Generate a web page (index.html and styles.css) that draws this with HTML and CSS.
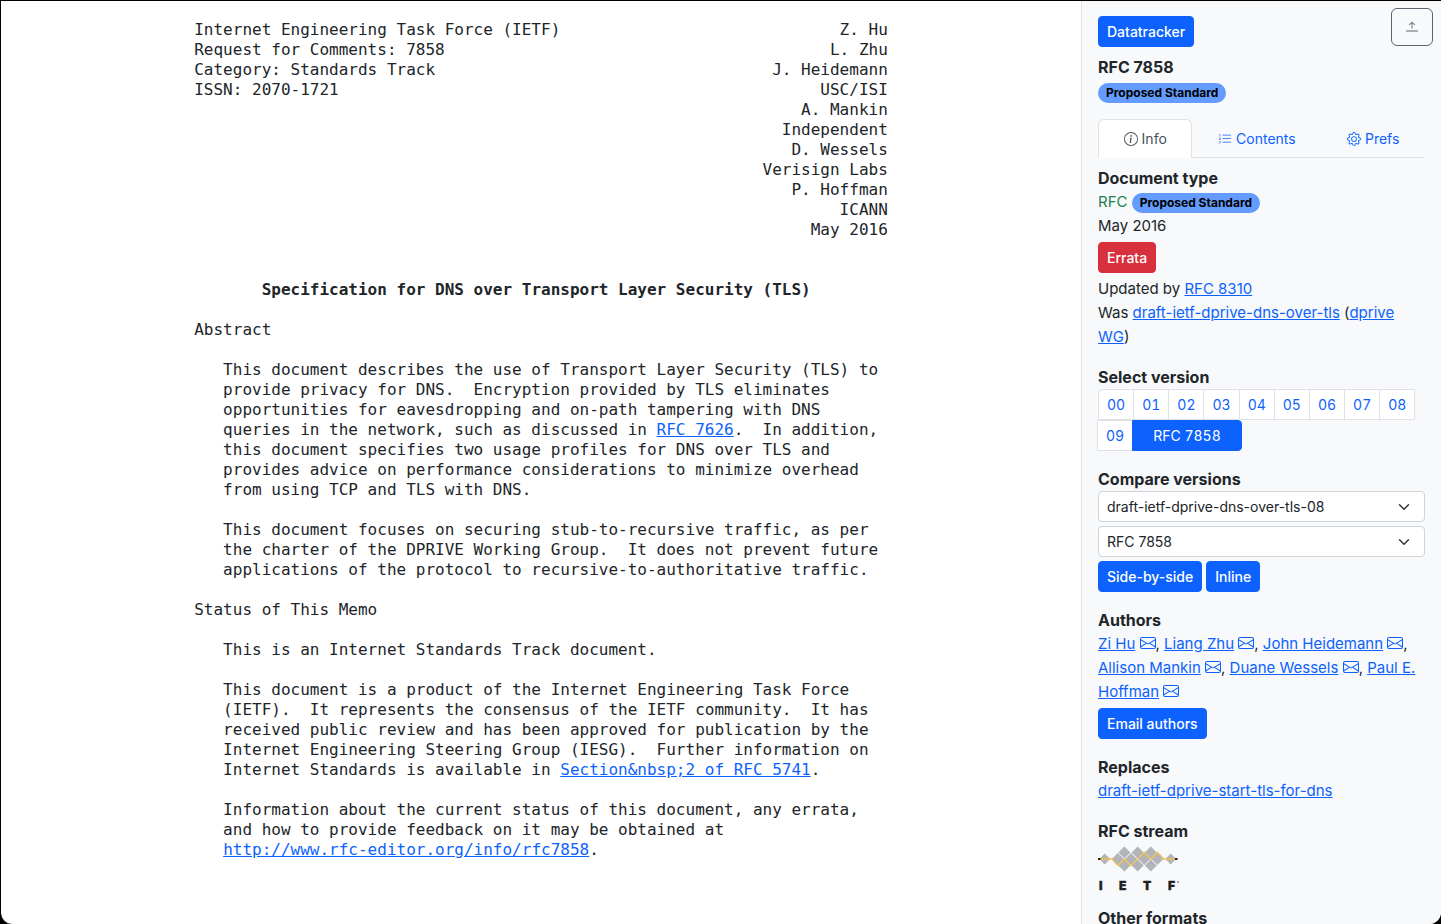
FILE: index.html
```html
<!DOCTYPE html>
<html lang="en">
<head>
<meta charset="utf-8">
<title>RFC 7858 - Specification for DNS over Transport Layer Security (TLS)</title>
<meta name="viewport" content="width=device-width, initial-scale=1">
<link rel="stylesheet" href="styles.css">
</head>
<body>
<svg class="symbols" aria-hidden="true">
  <symbol id="envelope" viewBox="0 0 16 16"><path d="M0 4a2 2 0 0 1 2-2h12a2 2 0 0 1 2 2v8a2 2 0 0 1-2 2H2a2 2 0 0 1-2-2zm2-1a1 1 0 0 0-1 1v.217l7 4.2 7-4.2V4a1 1 0 0 0-1-1zm13 2.383-4.708 2.825L15 11.105zm-.034 6.876-5.64-3.471L8 9.583l-1.326-.795-5.64 3.47A1 1 0 0 0 2 13h12a1 1 0 0 0 .966-.741M1 11.105l4.708-2.897L1 5.383z"/></symbol>
</svg>
<div class="window">
<main class="document">
<pre class="rfc-text">
Internet Engineering Task Force (IETF)                             Z. Hu
Request for Comments: 7858                                        L. Zhu
Category: Standards Track                                   J. Heidemann
ISSN: 2070-1721                                                  USC/ISI
                                                               A. Mankin
                                                             Independent
                                                              D. Wessels
                                                           Verisign Labs
                                                              P. Hoffman
                                                                   ICANN
                                                                May 2016


       <strong>Specification for DNS over Transport Layer Security (TLS)</strong>

Abstract

   This document describes the use of Transport Layer Security (TLS) to
   provide privacy for DNS.  Encryption provided by TLS eliminates
   opportunities for eavesdropping and on-path tampering with DNS
   queries in the network, such as discussed in <a href="#rfc7626">RFC 7626</a>.  In addition,
   this document specifies two usage profiles for DNS over TLS and
   provides advice on performance considerations to minimize overhead
   from using TCP and TLS with DNS.

   This document focuses on securing stub-to-recursive traffic, as per
   the charter of the DPRIVE Working Group.  It does not prevent future
   applications of the protocol to recursive-to-authoritative traffic.

Status of This Memo

   This is an Internet Standards Track document.

   This document is a product of the Internet Engineering Task Force
   (IETF).  It represents the consensus of the IETF community.  It has
   received public review and has been approved for publication by the
   Internet Engineering Steering Group (IESG).  Further information on
   Internet Standards is available in <a href="#rfc5741">Section&amp;nbsp;2 of RFC 5741</a>.

   Information about the current status of this document, any errata,
   and how to provide feedback on it may be obtained at
   <a href="#rfc7858">http://www.rfc-editor.org/info/rfc7858</a>.
</pre>
</main>
<aside class="sidebar">
  <button class="toggle" type="button" aria-label="Hide sidebar">
    <svg class="icon" viewBox="0 0 16 16"><path d="M8 10a.5.5 0 0 0 .5-.5V3.707l2.146 2.147a.5.5 0 0 0 .708-.708l-3-3a.5.5 0 0 0-.708 0l-3 3a.5.5 0 1 0 .708.708L7.5 3.707V9.5a.5.5 0 0 0 .5.5m-7 2.5a.5.5 0 0 1 .5-.5h13a.5.5 0 0 1 0 1h-13a.5.5 0 0 1-.5-.5"/></svg>
  </button>
  <header class="summary">
    <a class="btn" href="#datatracker">Datatracker</a>
    <div class="summary-title">RFC 7858</div>
    <span class="badge">Proposed Standard</span>
  </header>
  <nav class="tabs">
    <a class="tab active" href="#info"><svg class="icon" viewBox="0 0 16 16"><path d="M8 15A7 7 0 1 1 8 1a7 7 0 0 1 0 14m0 1A8 8 0 1 0 8 0a8 8 0 0 0 0 16"/><path d="m8.93 6.588-2.29.287-.082.38.45.083c.294.07.352.176.288.469l-.738 3.468c-.194.897.105 1.319.808 1.319.545 0 1.178-.252 1.465-.598l.088-.416c-.2.176-.492.246-.686.246-.275 0-.375-.193-.304-.533zM9 4.5a1 1 0 1 1-2 0 1 1 0 0 1 2 0"/></svg> Info</a>
    <a class="tab" href="#contents"><svg class="icon" viewBox="0 0 16 16"><path fill-rule="evenodd" d="M5 11.5a.5.5 0 0 1 .5-.5h9a.5.5 0 0 1 0 1h-9a.5.5 0 0 1-.5-.5m0-4a.5.5 0 0 1 .5-.5h9a.5.5 0 0 1 0 1h-9a.5.5 0 0 1-.5-.5m0-4a.5.5 0 0 1 .5-.5h9a.5.5 0 0 1 0 1h-9a.5.5 0 0 1-.5-.5"/><path d="M1.713 11.865v-.474H2c.217 0 .363-.137.363-.317 0-.185-.158-.31-.361-.31-.223 0-.367.152-.373.31h-.59c.016-.467.373-.787.986-.787.588-.002.954.291.957.703a.595.595 0 0 1-.492.594v.033a.615.615 0 0 1 .569.631c.003.533-.502.8-1.051.8-.656 0-1-.37-1.008-.794h.582c.008.178.186.306.422.309.254 0 .424-.145.422-.35-.002-.195-.155-.348-.414-.348h-.3zm-.004-4.699h-.604v-.035c0-.408.295-.844.958-.844.583 0 .96.326.96.756 0 .389-.257.617-.476.848l-.537.572v.03h1.054V9H1.143v-.395l.957-.99c.138-.142.293-.304.293-.508 0-.18-.147-.32-.342-.32a.33.33 0 0 0-.342.338zM2.564 5h-.635V2.924h-.031l-.598.42v-.567l.629-.443h.635z"/></svg> Contents</a>
    <a class="tab" href="#prefs"><svg class="icon" viewBox="0 0 16 16"><path d="M8 4.754a3.246 3.246 0 1 0 0 6.492 3.246 3.246 0 0 0 0-6.492M5.754 8a2.246 2.246 0 1 1 4.492 0 2.246 2.246 0 0 1-4.492 0"/><path d="M9.796 1.343c-.527-1.79-3.065-1.79-3.592 0l-.094.319a.873.873 0 0 1-1.255.52l-.292-.16c-1.64-.892-3.433.902-2.54 2.541l.159.292a.873.873 0 0 1-.52 1.255l-.319.094c-1.79.527-1.79 3.065 0 3.592l.319.094a.873.873 0 0 1 .52 1.255l-.16.292c-.892 1.64.901 3.434 2.541 2.54l.292-.159a.873.873 0 0 1 1.255.52l.094.319c.527 1.79 3.065 1.79 3.592 0l.094-.319a.873.873 0 0 1 1.255-.52l.292.16c1.64.893 3.434-.902 2.54-2.541l-.159-.292a.873.873 0 0 1 .52-1.255l.319-.094c1.79-.527 1.79-3.065 0-3.592l-.319-.094a.873.873 0 0 1-.52-1.255l.16-.292c.893-1.64-.902-3.433-2.541-2.54l-.292.159a.873.873 0 0 1-1.255-.52zm-2.633.283c.246-.835 1.428-.835 1.674 0l.094.319a1.873 1.873 0 0 0 2.693 1.115l.291-.16c.764-.415 1.6.42 1.184 1.185l-.159.292a1.873 1.873 0 0 0 1.116 2.692l.318.094c.835.246.835 1.428 0 1.674l-.319.094a1.873 1.873 0 0 0-1.115 2.693l.16.291c.415.764-.42 1.6-1.185 1.184l-.291-.159a1.873 1.873 0 0 0-2.693 1.116l-.094.318c-.246.835-1.428.835-1.674 0l-.094-.319a1.873 1.873 0 0 0-2.692-1.115l-.292.16c-.764.415-1.6-.42-1.184-1.185l.159-.291A1.873 1.873 0 0 0 1.945 8.93l-.319-.094c-.835-.246-.835-1.428 0-1.674l.319-.094A1.873 1.873 0 0 0 3.06 4.377l-.16-.292c-.415-.764.42-1.6 1.185-1.184l.292.159a1.873 1.873 0 0 0 2.692-1.115z"/></svg> Prefs</a>
  </nav>
  <div class="details">
    <section>
      <h2>Document type</h2>
      <div><span class="rfc">RFC</span> <span class="badge">Proposed Standard</span></div>
      <div>May 2016</div>
      <div class="actions"><a class="btn danger" href="#errata">Errata</a></div>
      <div>Updated by <a href="#rfc8310">RFC 8310</a></div>
      <div>Was <a href="#draft">draft-ietf-dprive-dns-over-tls</a> (<a href="#dprive">dprive WG</a>)</div>
    </section>
    <section>
      <h2>Select version</h2>
      <div class="versions">
        <a href="#v00">00</a><a href="#v01">01</a><a href="#v02">02</a><a href="#v03">03</a><a href="#v04">04</a><a href="#v05">05</a><a href="#v06">06</a><a href="#v07">07</a><a href="#v08">08</a><a href="#v09">09</a><a class="current" href="#rfc">RFC 7858</a>
      </div>
    </section>
    <section>
      <h2>Compare versions</h2>
      <form class="compare">
        <select aria-label="From revision"><option>draft-ietf-dprive-dns-over-tls-08</option></select>
        <select aria-label="To revision"><option>RFC 7858</option></select>
        <div class="compare-buttons">
          <button class="btn" type="button">Side-by-side</button>
          <button class="btn" type="button">Inline</button>
        </div>
      </form>
    </section>
    <section>
      <h2>Authors</h2>
      <div class="authors">
        <a href="#hu">Zi Hu</a> <a href="#mail-hu" aria-label="Email Zi Hu"><svg class="icon"><use href="#envelope"/></svg></a>,
        <a href="#zhu">Liang Zhu</a> <a href="#mail-zhu" aria-label="Email Liang Zhu"><svg class="icon"><use href="#envelope"/></svg></a>,
        <a href="#heidemann">John Heidemann</a> <a href="#mail-heidemann" aria-label="Email John Heidemann"><svg class="icon"><use href="#envelope"/></svg></a>,
        <a href="#mankin">Allison Mankin</a> <a href="#mail-mankin" aria-label="Email Allison Mankin"><svg class="icon"><use href="#envelope"/></svg></a>,
        <a href="#wessels">Duane Wessels</a> <a href="#mail-wessels" aria-label="Email Duane Wessels"><svg class="icon"><use href="#envelope"/></svg></a>,
        <a href="#hoffman">Paul E. Hoffman</a> <a href="#mail-hoffman" aria-label="Email Paul E. Hoffman"><svg class="icon"><use href="#envelope"/></svg></a>
      </div>
      <div class="actions"><a class="btn" href="#email">Email authors</a></div>
    </section>
    <section>
      <h2>Replaces</h2>
      <a href="#replaces">draft-ietf-dprive-start-tls-for-dns</a>
    </section>
    <section>
      <h2>RFC stream</h2>
      <svg class="logo" viewBox="0 0 84 47" role="img" aria-label="IETF">
        <g fill="#b3b4b8">
          <path d="M6.7 10.6l5.4 5.4-5.4 5.4L1.3 16zM72.7 10.6l5.4 5.4-5.4 5.4-5.4-5.4z"/>
          <path d="M26.4 3.4l6 6-6 6-6-6zM39.6 3.4l6 6-6 6-6-6zM52.8 3.4l6 6-6 6-6-6z"/>
          <path d="M19.8 10l6 6-6 6-6-6zM33 10l6 6-6 6-6-6zM46.2 10l6 6-6 6-6-6zM59.4 10l6 6-6 6-6-6z"/>
          <path d="M26.4 16.6l6 6-6 6-6-6zM39.6 16.6l6 6-6 6-6-6zM52.8 16.6l6 6-6 6-6-6z"/>
        </g>
        <path fill="none" stroke="#eec04f" stroke-width="1.3" d="M2 16h12l6 6.6 6.4-6.6 6.6 6.6 13.2-13.2 6.6 6.6 6.6-6.6L66 16h10"/>
        <path fill="#231f20" d="M0 15h2.5v2H0zM77 15h2.5v2H77z"/>
        <g class="logo-text"><text x="1" y="47">I</text><text x="21" y="47">E</text><text x="45" y="47">T</text><text x="70" y="47">F</text></g>
        <circle cx="80" cy="39" r="1" fill="#888"/>
      </svg>
    </section>
    <section>
      <h2>Other formats</h2>
    </section>
  </div>
</aside>
</div>
</body>
</html>
```
FILE: styles.css
```css
:root {
  --blue: #0d62fe;
  --ink: #212529;
  --line: #dee2e6;
}

* { box-sizing: border-box; }

html { background: #000; }

body {
  margin: 0;
  color: var(--ink);
  font: 15px/24px Inter, sans-serif;
}

a { color: var(--blue); }

.symbols {
  position: absolute;
  width: 0;
  height: 0;
}

.icon {
  width: 1em;
  height: 1em;
  fill: currentColor;
  vertical-align: -0.125em;
}

.window {
  display: flex;
  height: 100vh;
  border: solid #000;
  border-width: 1px 0 0 1px;
  border-radius: 0 0 12px 12px;
  background: #fff;
  overflow: hidden;
}

.document {
  flex: 1;
  min-width: 0;
  overflow: auto;
  scrollbar-width: none;
}

.rfc-text {
  width: max-content;
  margin: 0 auto;
  padding: 19px 0;
  font: 16px/20px "DejaVu Sans Mono", monospace;
}

.sidebar {
  position: relative;
  flex: 0 0 25%;
  padding: 15px 16px;
  border-left: 1px solid var(--line);
  background: #f7f9fb;
  overflow: auto;
  scrollbar-width: none;
}

.toggle {
  position: absolute;
  top: 7px;
  right: 8px;
  width: 42px;
  height: 38px;
  padding: 0;
  border: 1px solid #5c6570;
  border-radius: 6px;
  background: transparent;
  color: #5c6570;
  font-size: 14px;
}

.btn {
  display: inline-block;
  padding: 4px 8px;
  border: 1px solid var(--blue);
  border-radius: 4px;
  background: var(--blue);
  color: #fff;
  font: 500 14px/21px Inter, sans-serif;
  text-decoration: none;
  vertical-align: top;
}

.btn.danger {
  border-color: #d8303d;
  background: #d8303d;
}

.badge {
  display: inline-block;
  padding: 4px 8px;
  border-radius: 10px;
  background: #639bff;
  color: #000;
  font-size: 12px;
  font-weight: 700;
  line-height: 12px;
  vertical-align: middle;
}

.summary {
  display: flex;
  flex-direction: column;
  align-items: flex-start;
}

.summary-title {
  margin: 8px 0 4px;
  font-size: 16px;
  font-weight: 700;
}

.tabs {
  display: flex;
  margin: 16px 0 8px;
  border-bottom: 1px solid var(--line);
  font-size: 14px;
  line-height: 21px;
}

.tab {
  flex: 1 1 auto;
  margin-bottom: -1px;
  padding: 8px 16px;
  border: 1px solid transparent;
  border-radius: 6px 6px 0 0;
  text-align: center;
  text-decoration: none;
}

.tab.active {
  border-color: var(--line) var(--line) #fff;
  background: #fff;
  color: #495057;
}

.details {
  display: flex;
  flex-direction: column;
  gap: 16px;
}

h2 {
  margin: 0;
  font-size: 16px;
  font-weight: 700;
  line-height: 24px;
}

.rfc { color: #1f7f4f; }

.authors .icon { font-size: 16px; }

.actions { padding: 4px 0; }

section:has(> .actions:last-child) .actions { padding-bottom: 0; }

.versions {
  display: flex;
  flex-wrap: wrap;
  font-size: 14px;
  font-variant-numeric: tabular-nums;
  line-height: 21px;
}

.versions a {
  margin-left: -1px;
  padding: 4px 8px;
  border: 1px solid var(--line);
  background: #fff;
  text-decoration: none;
}

.versions a:first-child {
  margin-left: 0;
  border-radius: 4px 0 0;
}

.versions .current {
  padding: 4px 20px;
  border-color: var(--blue);
  border-radius: 0 4px 4px 0;
  background: var(--blue);
  color: #fff;
}

.compare {
  display: grid;
  gap: 4px;
}

.compare select {
  width: 100%;
  padding: 4px 32px 4px 8px;
  border: 1px solid #ced4da;
  border-radius: 4px;
  background: #fff url("data:image/svg+xml,%3Csvg xmlns='http://www.w3.org/2000/svg' viewBox='0 0 16 16'%3E%3Cpath fill='none' stroke='%23343a40' stroke-linecap='round' stroke-linejoin='round' stroke-width='2' d='m2 5 6 6 6-6'/%3E%3C/svg%3E") no-repeat right 14px center / 12px;
  color: var(--ink);
  font: 14px/21px Inter, sans-serif;
  appearance: none;
}

.compare-buttons {
  display: flex;
  gap: 4px;
}

.logo {
  display: block;
  width: 84px;
  height: 47px;
  overflow: visible;
}

.logo-text {
  fill: #231f20;
  stroke: #231f20;
  stroke-width: 0.4;
  font: 900 12px Inter, sans-serif;
}
```
